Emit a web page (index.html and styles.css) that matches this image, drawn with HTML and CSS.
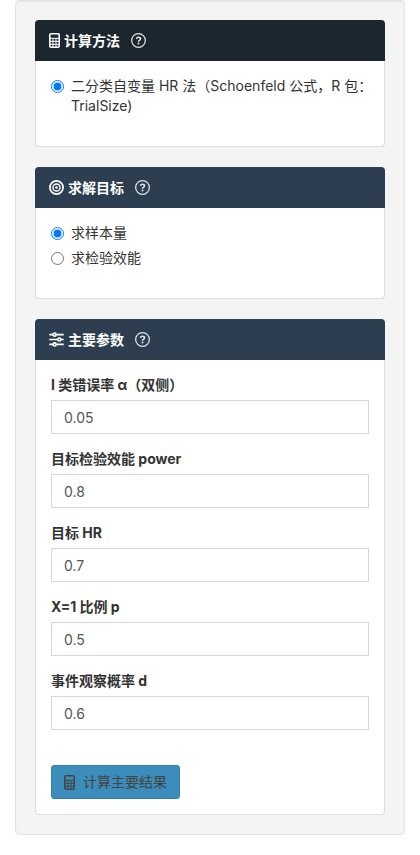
FILE: index.html
```html
<!DOCTYPE html>
<html lang="zh-CN">
<head>
<meta charset="utf-8">
<meta name="viewport" content="width=device-width, initial-scale=1">
<title>样本量计算</title>
<link rel="stylesheet" href="styles.css">
</head>
<body>
<svg class="sprite" aria-hidden="true">
  <symbol id="calculator" viewBox="0 0 11 15">
    <rect x=".8" y=".8" width="9.4" height="13.4" rx="1.2" fill="none" stroke="currentColor" stroke-width="1.6"/>
    <path d="M1 5.3h9M1 8.3h9M1 11.3h9" fill="none" stroke="currentColor" stroke-width="1"/>
    <path d="M4 5.3v8.7M7 5.3v8.7" fill="none" stroke="currentColor" stroke-width="1"/>
  </symbol>
  <symbol id="target" viewBox="0 0 16 16">
    <g fill="none" stroke="currentColor">
      <circle cx="8" cy="8" r="7" stroke-width="1.9"/>
      <circle cx="8" cy="8" r="3.8" stroke-width="1.5"/>
    </g>
    <circle cx="8" cy="8" r="1.4" fill="currentColor"/>
  </symbol>
  <symbol id="sliders" viewBox="0 0 16 16">
    <g fill="none" stroke="currentColor" stroke-width="1.7">
      <path d="M.3 2.8h4.1M7.6 2.8h8.1M.3 8h9.1M12.6 8h3.1M.3 13.2h4.1M7.6 13.2h8.1"/>
      <circle cx="6" cy="2.8" r="1.6"/>
      <circle cx="11" cy="8" r="1.6"/>
      <circle cx="6" cy="13.2" r="1.6"/>
    </g>
  </symbol>
  <symbol id="help" viewBox="0 0 16 16">
    <circle cx="8" cy="8" r="7.3" fill="none" stroke="currentColor" stroke-width="1.3"/>
    <path d="M5.9 6.2c.1-1.1.9-1.7 2.1-1.7s2.1.6 2.1 1.6c0 .8-.4 1.2-1.1 1.7-.7.4-1 .7-1 1.4" fill="none" stroke="currentColor" stroke-width="1.6"/>
    <circle cx="8" cy="11.2" r="1" fill="currentColor"/>
  </symbol>
</svg>

<form class="well">
  <section class="card">
    <h2 class="card-header card-header-dark">
      <svg class="icon icon-calculator" aria-hidden="true"><use href="#calculator"/></svg>
      <span>计算方法</span>
      <button class="help" type="button" aria-label="计算方法帮助"><svg class="icon" aria-hidden="true"><use href="#help"/></svg></button>
    </h2>
    <div class="card-body options">
      <label class="option"><input type="radio" name="method" checked><span>二分类自变量 HR 法（Schoenfeld 公式，R 包：TrialSize)</span></label>
    </div>
  </section>

  <section class="card">
    <h2 class="card-header">
      <svg class="icon" aria-hidden="true"><use href="#target"/></svg>
      <span>求解目标</span>
      <button class="help" type="button" aria-label="求解目标帮助"><svg class="icon" aria-hidden="true"><use href="#help"/></svg></button>
    </h2>
    <div class="card-body options">
      <label class="option"><input type="radio" name="goal" checked><span>求样本量</span></label>
      <label class="option"><input type="radio" name="goal"><span>求检验效能</span></label>
    </div>
  </section>

  <section class="card">
    <h2 class="card-header">
      <svg class="icon" aria-hidden="true"><use href="#sliders"/></svg>
      <span>主要参数</span>
      <button class="help" type="button" aria-label="主要参数帮助"><svg class="icon" aria-hidden="true"><use href="#help"/></svg></button>
    </h2>
    <div class="card-body">
      <div class="field"><label for="alpha">I 类错误率 α（双侧）</label><input id="alpha" type="text" inputmode="decimal" value="0.05"></div>
      <div class="field"><label for="power">目标检验效能 power</label><input id="power" type="text" inputmode="decimal" value="0.8"></div>
      <div class="field"><label for="hr">目标 HR</label><input id="hr" type="text" inputmode="decimal" value="0.7"></div>
      <div class="field"><label for="p">X=1 比例 p</label><input id="p" type="text" inputmode="decimal" value="0.5"></div>
      <div class="field"><label for="d">事件观察概率 d</label><input id="d" type="text" inputmode="decimal" value="0.6"></div>
      <button class="submit" type="button"><svg class="icon icon-calculator" aria-hidden="true"><use href="#calculator"/></svg><span>计算主要结果</span></button>
    </div>
  </section>
</form>
</body>
</html>
```
FILE: styles.css
```css
* {
  box-sizing: border-box;
}

body {
  margin: 0;
  padding: 0 15px 20px;
  background: #fff;
  color: #333;
  font: 14px/20px Inter, "Noto Sans CJK SC", sans-serif;
}

.sprite {
  display: none;
}

.well {
  display: flex;
  flex-direction: column;
  gap: 20px;
  padding: 19px;
  border: 1px solid #e3e3e3;
  border-radius: 4px;
  background: #f4f4f4;
  box-shadow: inset 0 1px 1px rgba(0, 0, 0, 0.05);
}

.card {
  border: 1px solid #ddd;
  border-top: 0;
  border-radius: 4px;
  background: #fff;
}

.card-header {
  display: flex;
  align-items: center;
  gap: 4px;
  height: 41px;
  margin: 0 -1px;
  padding: 0 14px;
  border-radius: 4px 4px 0 0;
  background: #2c3e50;
  color: #fff;
  font-size: 14px;
  font-weight: 700;
}

.card-header-dark {
  background: #1c262f;
}

.icon {
  display: block;
  flex: none;
  width: 15px;
  height: 15px;
}

.icon-calculator {
  width: 11px;
}

.help {
  margin: 0 0 0 7px;
  padding: 0;
  border: 0;
  background: none;
  color: #e4e7ea;
}

.card-body {
  padding: 15px;
}

.options {
  display: flex;
  flex-direction: column;
  gap: 5px;
  padding-right: 10px;
  padding-bottom: 30px;
}

.option {
  display: flex;
  align-items: flex-start;
  gap: 7px;
}

.option input {
  flex: none;
  width: 13px;
  height: 13px;
  margin: 4px 0 0;
  accent-color: #007aff;
}

.field {
  margin-bottom: 15px;
}

.field label {
  display: block;
  margin-bottom: 5px;
  font-weight: 700;
}

.field input {
  display: block;
  width: 100%;
  height: 34px;
  padding: 6px 12px;
  border: 1px solid #d2d6de;
  border-radius: 0;
  background: #fff;
  color: #555;
  font: inherit;
}

.submit {
  display: flex;
  align-items: center;
  gap: 8px;
  height: 34px;
  margin-top: 35px;
  padding: 0 12px;
  border: 1px solid #367fa9;
  border-radius: 3px;
  background: #3c8dbc;
  color: #444;
  font: inherit;
}
```
